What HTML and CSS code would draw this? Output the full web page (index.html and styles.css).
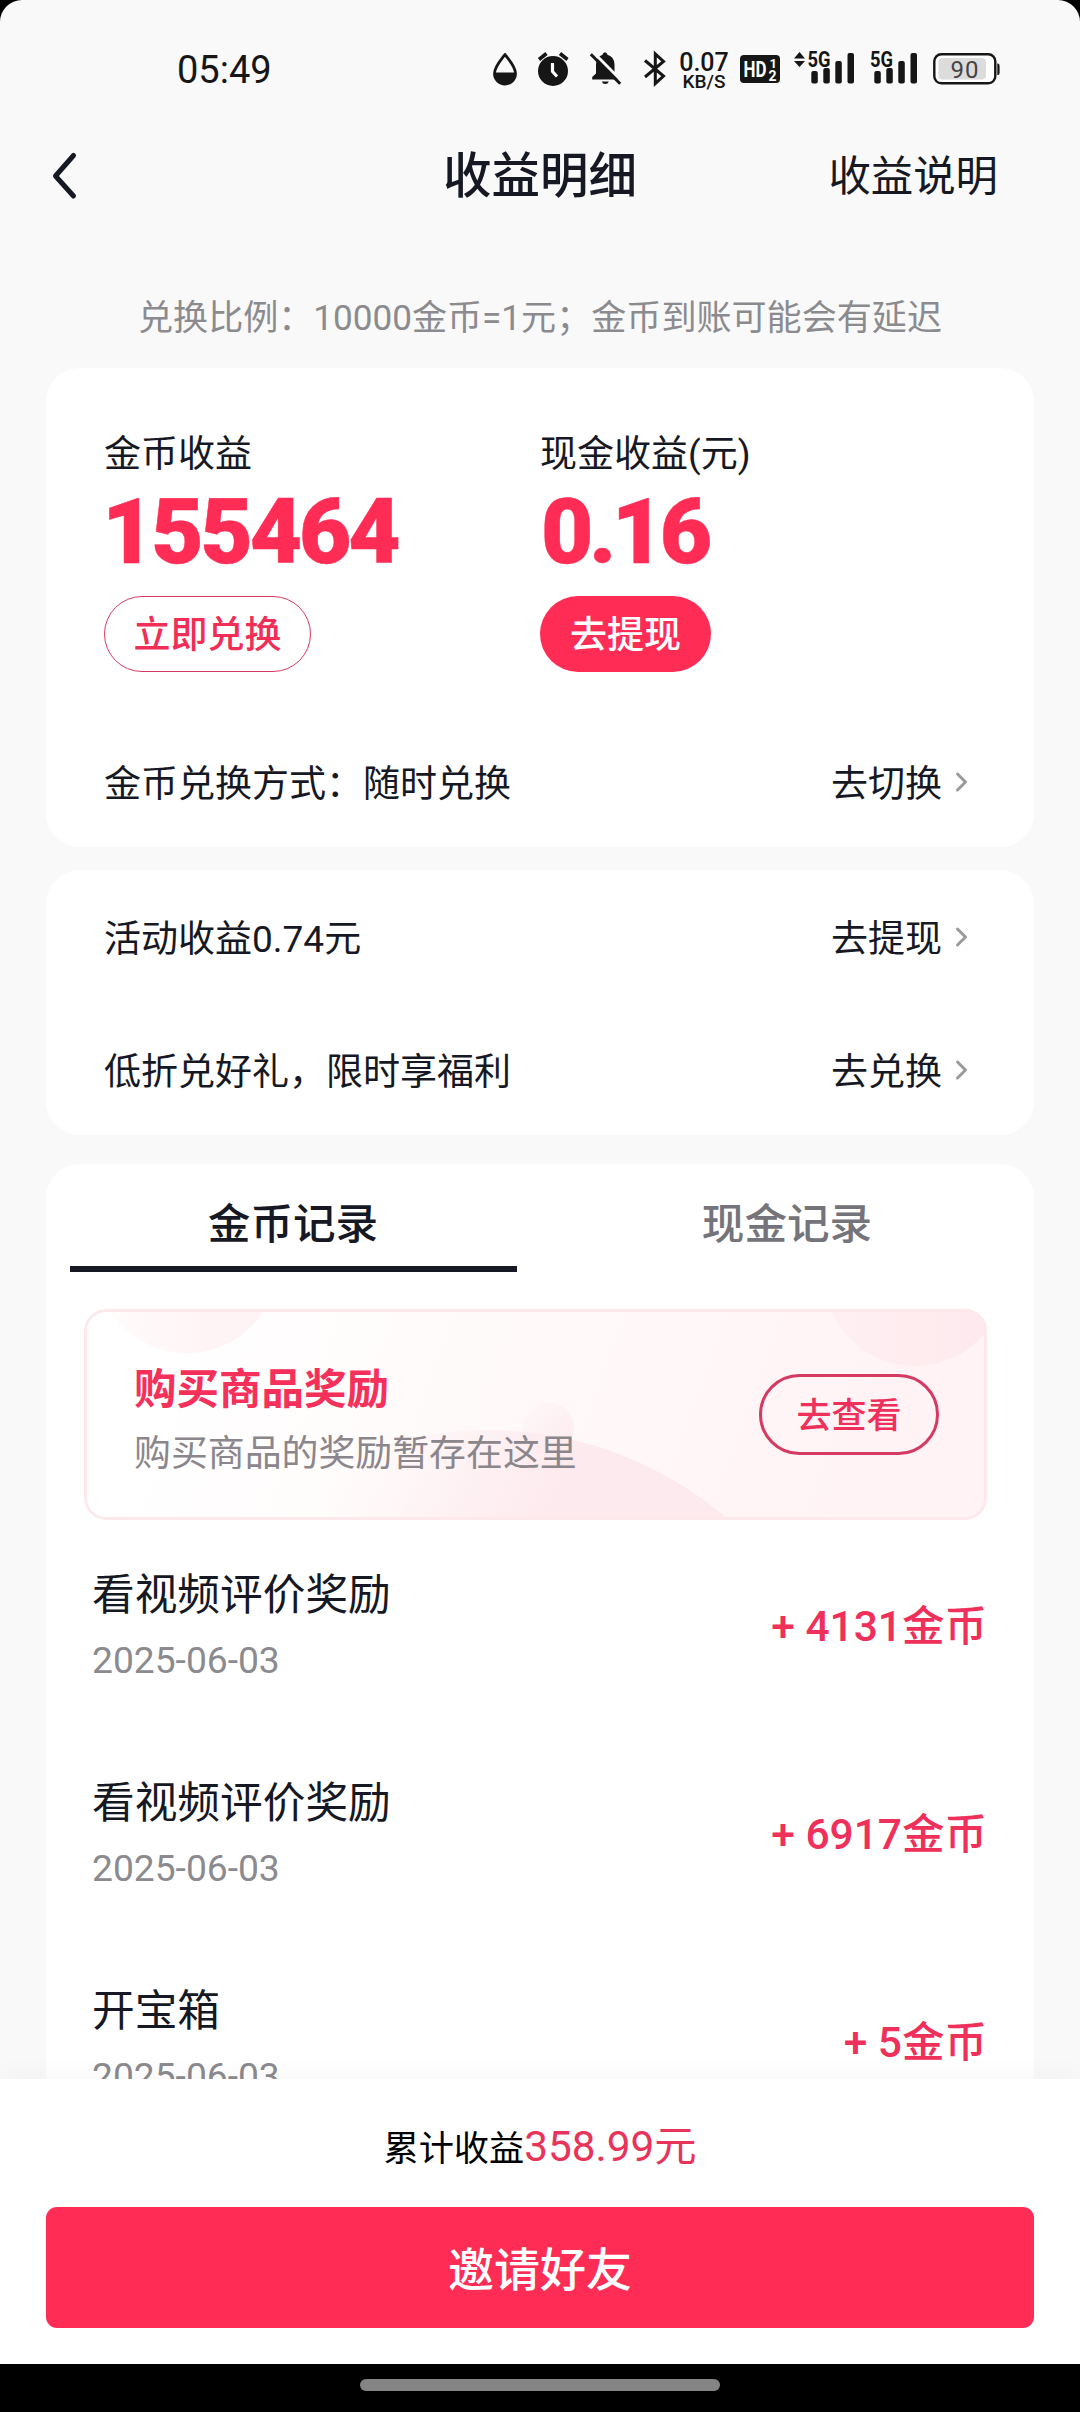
FILE: index.html
```html
<!DOCTYPE html>
<html lang="zh-CN">
<head>
<meta charset="utf-8">
<title>收益明细</title>
<link rel="stylesheet" href="styles.css">
</head>
<body>
<div class="screen">
  <div class="status">
    <span class="clock">05:49</span>
    <div class="status-icons">
      <svg class="i-drop" width="28" height="36" viewBox="0 0 28 36">
        <path d="M14 4.500 C18 10 24.500 16.500 24.500 23.500 A10.500 10.500 0 0 1 3.500 23.500 C3.500 16.500 10 10 14 4.500Z" fill="none" stroke="#161616" stroke-width="2.800" stroke-linejoin="round"/>
        <path d="M3 22.500H25A11 11.500 0 0 1 3 22.500Z" fill="#161616"/>
      </svg>
      <svg class="i-alarm" width="33" height="36" viewBox="0 0 33 36">
        <circle cx="16" cy="21" r="15" fill="#161616"/>
        <path d="M2 9.500L9.500 3.500M30.500 9.500L23 3.500" stroke="#161616" stroke-width="3.600"/>
        <path d="M15.500 13V21.500L20 26.500" fill="none" stroke="#fff" stroke-width="3.200"/>
      </svg>
      <svg class="i-bell" width="33" height="36" viewBox="0 0 33 36">
        <path d="M13.500 4.800Q14 2.300 16 2.300T18.500 4.800Q25.500 7 25.500 14.500V23L29.500 27V29.500H3.200V27L7 23.500V14.500Q7 7 13.500 4.800ZM12.800 31.500H19.800Q19 34 16.300 34T12.800 31.500Z" fill="#161616"/>
        <path d="M4 2L33.500 31.800" stroke="#f9f9f9" stroke-width="3"/>
        <path d="M1.800 4.200L31.200 33.700" stroke="#161616" stroke-width="3"/>
      </svg>
      <svg class="i-bt" width="24" height="36" viewBox="0 0 24 36">
        <path d="M2 10.500L20.500 26L12.300 33.500V4L20.500 11.500L2 27" fill="none" stroke="#161616" stroke-width="3" stroke-linejoin="miter"/>
      </svg>
      <div class="speed"><span class="speed-num">0.07</span><span class="speed-unit">KB/S</span></div>
      <svg class="i-hd" width="40" height="36" viewBox="0 0 40 36">
        <rect x="0" y="5" width="40" height="28" rx="4" fill="#161616"/>
        <g fill="#fff" font-family="Roboto, sans-serif" font-weight="700">
          <text x="3.500" y="27" font-size="22" textLength="23" lengthAdjust="spacingAndGlyphs">HD</text>
          <text x="29.500" y="18" font-size="13">1</text>
          <text x="28.500" y="30.500" font-size="14">2</text>
        </g>
      </svg>
      <svg class="i-sig" width="61" height="36" viewBox="0 0 61 36">
        <path d="M0 8.500L5.500 2L11 8.500ZM0 11L5.500 17L11 11Z" fill="#161616"/>
        <text x="13.500" y="17" font-size="21.500" textLength="23" lengthAdjust="spacingAndGlyphs" fill="#161616" font-family="Roboto, sans-serif" font-weight="700">5G</text>
        <g fill="#161616"><rect x="17.300" y="21" width="6.500" height="12.500" rx="2"/><rect x="29.300" y="18" width="6.500" height="15.500" rx="2"/><rect x="41.300" y="11" width="6.500" height="22.500" rx="2"/><rect x="53.500" y="3" width="6.500" height="30.500" rx="2"/></g>
      </svg>
      <svg class="i-sig2" width="48" height="36" viewBox="0 0 48 36">
        <text x="0" y="17" font-size="21.500" textLength="23" lengthAdjust="spacingAndGlyphs" fill="#161616" font-family="Roboto, sans-serif" font-weight="700">5G</text>
        <g fill="#161616"><rect x="4.300" y="21" width="6.500" height="12.500" rx="2"/><rect x="16.300" y="18" width="6.500" height="15.500" rx="2"/><rect x="28.300" y="11" width="6.500" height="22.500" rx="2"/><rect x="40.500" y="3" width="6.500" height="30.500" rx="2"/></g>
      </svg>
      <svg class="i-bat" width="67" height="36" viewBox="0 0 67 36">
        <rect x="1.300" y="4.300" width="61" height="29" rx="7" fill="#fff" stroke="#161616" stroke-width="2.400"/>
        <rect x="5.500" y="8" width="47.500" height="21.500" rx="4" fill="#dcdcdc"/>
        <path d="M64.300 13.500H65Q66.600 13.500 66.600 16V22.500Q66.600 25 65 25H64.300Z" fill="#161616"/>
        <text x="17.500" y="28" font-size="24" textLength="28" fill="#444" font-family="Roboto, sans-serif">90</text>
      </svg>
    </div>
  </div>

  <header class="nav">
    <svg class="back" width="26" height="50" viewBox="0 0 26 50"><path d="M22.500 4.500L4.500 25L22.500 45" fill="none" stroke="#161823" stroke-width="5" stroke-linecap="round" stroke-linejoin="round"/></svg>
    <h1 class="title">收益明细</h1>
    <span class="help">收益说明</span>
  </header>

  <p class="notice">兑换比例：10000金币=1元；金币到账可能会有延迟</p>

  <main class="cards">
    <section class="card summary">
      <div class="balances">
        <div class="balance">
          <span class="label">金币收益</span>
          <strong class="amount">155464</strong>
          <span class="pill outline">立即兑换</span>
        </div>
        <div class="balance">
          <span class="label">现金收益(元)</span>
          <strong class="amount cash">0.16</strong>
          <span class="pill solid">去提现</span>
        </div>
      </div>
      <div class="row"><span>金币兑换方式：随时兑换</span><span class="link">去切换<svg class="chev" width="14" height="22" viewBox="0 0 14 22"><path d="M2.500 3L10.500 11L2.500 19" fill="none" stroke="#999" stroke-width="3" stroke-linecap="round" stroke-linejoin="round"/></svg></span></div>
    </section>

    <section class="card extras">
      <div class="row"><span>活动收益0.74元</span><span class="link">去提现<svg class="chev" width="14" height="22" viewBox="0 0 14 22"><path d="M2.500 3L10.500 11L2.500 19" fill="none" stroke="#999" stroke-width="3" stroke-linecap="round" stroke-linejoin="round"/></svg></span></div>
      <div class="row"><span>低折兑好礼，限时享福利</span><span class="link">去兑换<svg class="chev" width="14" height="22" viewBox="0 0 14 22"><path d="M2.500 3L10.500 11L2.500 19" fill="none" stroke="#999" stroke-width="3" stroke-linecap="round" stroke-linejoin="round"/></svg></span></div>
    </section>

    <section class="card records">
      <div class="tabs">
        <span class="tab active">金币记录</span>
        <span class="tab">现金记录</span>
      </div>
      <div class="banner">
        <svg class="banner-art" width="904" height="211" viewBox="0 0 904 211">
          <defs>
            <linearGradient id="hill" gradientUnits="userSpaceOnUse" x1="290" y1="110" x2="470" y2="200"><stop offset="0" stop-color="#fdeaee" stop-opacity="0"/><stop offset="1" stop-color="#fdeaee"/></linearGradient>
            <linearGradient id="ball" x1="0" y1="0" x2="1" y2="1"><stop offset="0" stop-color="#fdeaee" stop-opacity="0"/><stop offset="1" stop-color="#fdeaee"/></linearGradient>
            <linearGradient id="left" x1="0" y1="0" x2="1" y2="0"><stop offset="0" stop-color="#fff4f5" stop-opacity=".2"/><stop offset=".6" stop-color="#fff4f5"/></linearGradient>
            <linearGradient id="right" x1="0" y1="0" x2="1" y2="0"><stop offset="0" stop-color="#ffeff2"/><stop offset="1" stop-color="#fde9ed"/></linearGradient>
          </defs>
          <circle cx="103" cy="-48" r="92" fill="url(#left)"/>
          <circle cx="831" cy="-34" r="91" fill="url(#right)"/>
          <circle cx="464" cy="119" r="26" fill="url(#ball)"/>
          <circle cx="404" cy="489" r="368" fill="url(#hill)"/>
        </svg>
        <div class="banner-text">
          <b class="banner-title">购买商品奖励</b>
          <span class="banner-sub">购买商品的奖励暂存在这里</span>
        </div>
        <span class="banner-btn">去查看</span>
      </div>
      <div class="item"><div class="info"><span class="name">看视频评价奖励</span><span class="date">2025-06-03</span></div><span class="gain">+ 4131金币</span></div>
      <div class="item"><div class="info"><span class="name">看视频评价奖励</span><span class="date">2025-06-03</span></div><span class="gain">+ 6917金币</span></div>
      <div class="item"><div class="info"><span class="name">开宝箱</span><span class="date">2025-06-03</span></div><span class="gain">+ 5金币</span></div>
    </section>
  </main>

  <footer class="footer">
    <p class="total">累计收益<span class="total-num">358.99元</span></p>
    <div class="invite">邀请好友</div>
  </footer>
  <div class="gesture"><span class="handle"></span></div>
</div>
</body>
</html>
```
FILE: styles.css
```css
* { box-sizing: border-box; margin: 0; padding: 0; }
body {
  background: #000;
  font-family: Roboto, "Noto Sans CJK SC", sans-serif;
  color: #161823;
}
svg { display: block; flex: none; overflow: visible; }
.screen {
  width: 1080px;
  height: 2412px;
  overflow: hidden;
  display: flex;
  flex-direction: column;
  background: #f9f9f9;
  border-radius: 22px 22px 0 0;
}

/* status bar */
.status {
  flex: none;
  height: 130px;
  padding: 50px 80px 0 177px;
  display: flex;
  justify-content: space-between;
  align-items: flex-start;
}
.clock { font-size: 38px; line-height: 40px; color: #161616; }
.status-icons { display: flex; height: 36px; }
.i-alarm { margin-left: 18px; }
.i-bell { margin-left: 19px; }
.i-bt { margin-left: 21px; }
.i-hd { margin-left: 11px; }
.i-sig { margin-left: 14px; }
.i-sig2, .i-bat { margin-left: 15px; }
.speed {
  width: 50px;
  margin-left: 12px;
  display: flex;
  flex-direction: column;
  align-items: center;
  color: #161616;
  font-weight: 500;
}
.speed-num { font-size: 25px; line-height: 25px; }
.speed-unit { font-size: 19px; line-height: 14px; }

/* title bar */
.nav {
  flex: none;
  height: 92px;
  padding: 0 82px 0 51px;
  display: grid;
  grid-template-columns: 389px 200px 1fr;
  align-items: center;
}
.title {
  text-align: center;
  white-space: nowrap;
  padding-top: 2px;
  font-size: 48.500px;
  line-height: 60px;
  font-weight: 500;
}
.help { justify-self: end; padding-top: 2px; font-size: 42.400px; line-height: 60px; }
.notice {
  flex: none;
  padding-top: 71px;
  height: 146px;
  text-align: center;
  font-size: 35.100px;
  line-height: 50px;
  color: #8b8b8f;
}

/* cards */
.cards {
  flex: 1;
  min-height: 0;
  overflow: hidden;
  padding: 0 46px;
  display: flex;
  flex-direction: column;
}
.card { flex: none; background: #fff; border-radius: 34px; font-size: 37px; }
.summary { height: 479px; padding: 62px 58px 0; }
.balances { display: grid; grid-template-columns: 436px 1fr; height: 330px; }
.balance { display: flex; flex-direction: column; align-items: flex-start; }
.label { line-height: 50px; }
.amount {
  font-size: 90.500px;
  line-height: 100px;
  height: 116px;
  padding-top: 2px;
  margin-left: -2px;
  font-weight: 900;
  letter-spacing: -3.200px;
  color: #ff2c55;
  -webkit-text-stroke: .5px #ff2c55;
}
.cash { margin-left: 1px; letter-spacing: -4.500px; }
.pill {
  height: 76px;
  line-height: 80px;
  border-radius: 38px;
  padding: 0 30px;
  font-weight: 500;
}
.outline { border: 1px solid #d53a62; padding: 0 28.500px; line-height: 78px; color: #f02e56; }
.solid { background: #ff2c55; color: #fff; }
.row { display: flex; justify-content: space-between; line-height: 50px; }
.link { display: flex; align-items: center; }
.chev { margin: -6px 0 0 13px; }
.summary .row, .extras .row { padding-right: 7px; }
.extras {
  height: 265px;
  margin-top: 23px;
  padding: 45px 58px 0;
  display: flex;
  flex-direction: column;
  gap: 83px;
}
.records { margin-top: 29px; height: 1100px; }

/* tabs */
.tabs { display: grid; grid-template-columns: 1fr 1fr; height: 108px; }
.tab {
  justify-self: center;
  width: 447px;
  padding-top: 30px;
  text-align: center;
  font-size: 42.600px;
  line-height: 60px;
  font-weight: 500;
  color: #74747a;
}
.active { color: #161823; border-bottom: 6px solid #161823; }

/* reward banner */
.banner {
  position: relative;
  width: 903px;
  height: 211px;
  margin: 37px 0 0 38px;
  padding: 10px 48px 0 50px;
  display: flex;
  justify-content: space-between;
  align-items: flex-start;
  overflow: hidden;
  border-radius: 22px;
  background: linear-gradient(110deg, #fff 10%, #fff9f9 50%, #fff3f5 85%);
}
.banner::after {
  content: "";
  position: absolute;
  inset: 0;
  border: 3px solid #fde8ec;
  border-radius: 22px;
}
.banner-art { position: absolute; left: 0; top: 0; }
.banner-text { position: relative; display: flex; flex-direction: column; gap: 8px; padding-top: 41px; }
.banner-title { font-size: 42.500px; line-height: 60px; color: #f5305a; }
.banner-sub { font-size: 36.900px; line-height: 52px; color: #8b868b; }
.banner-btn {
  position: relative;
  width: 180px;
  height: 81px;
  margin-top: 55px;
  border: 3px solid #d43a62;
  border-radius: 41px;
  text-align: center;
  font-size: 35px;
  line-height: 80px;
  font-weight: 500;
  color: #ee305a;
}

/* record list */
.item {
  height: 208px;
  padding: 6px 47px 0 46px;
  display: flex;
  justify-content: space-between;
  align-items: center;
}
.info { display: flex; flex-direction: column; }
.name { font-size: 42.700px; line-height: 66px; padding-top: 1px; }
.date { font-size: 37.200px; line-height: 65px; color: #8b8b8f; }
.gain { font-size: 42.500px; line-height: 60px; font-weight: 500; color: #ee305a; }

/* bottom bar */
.footer {
  flex: none;
  height: 285px;
  padding: 38px 46px 0;
  background: #fff;
  box-shadow: 0 -4px 24px rgba(0, 0, 0, .035);
  position: relative;
}
.total {
  height: 90px;
  text-align: center;
  font-size: 35.200px;
  line-height: 60px;
  color: #000;
}
.total-num { font-size: 42.300px; color: #e8335b; }
.invite {
  height: 121px;
  border-radius: 11px;
  background: #ff2c55;
  color: #fff;
  text-align: center;
  font-size: 46px;
  line-height: 126px;
  font-weight: 500;
}
.gesture {
  flex: none;
  height: 48px;
  padding-top: 15px;
  background: #000;
  position: relative;
}
.handle {
  display: block;
  width: 360px;
  height: 12px;
  margin: 0 auto;
  border-radius: 6px;
  background: #848484;
}
```
